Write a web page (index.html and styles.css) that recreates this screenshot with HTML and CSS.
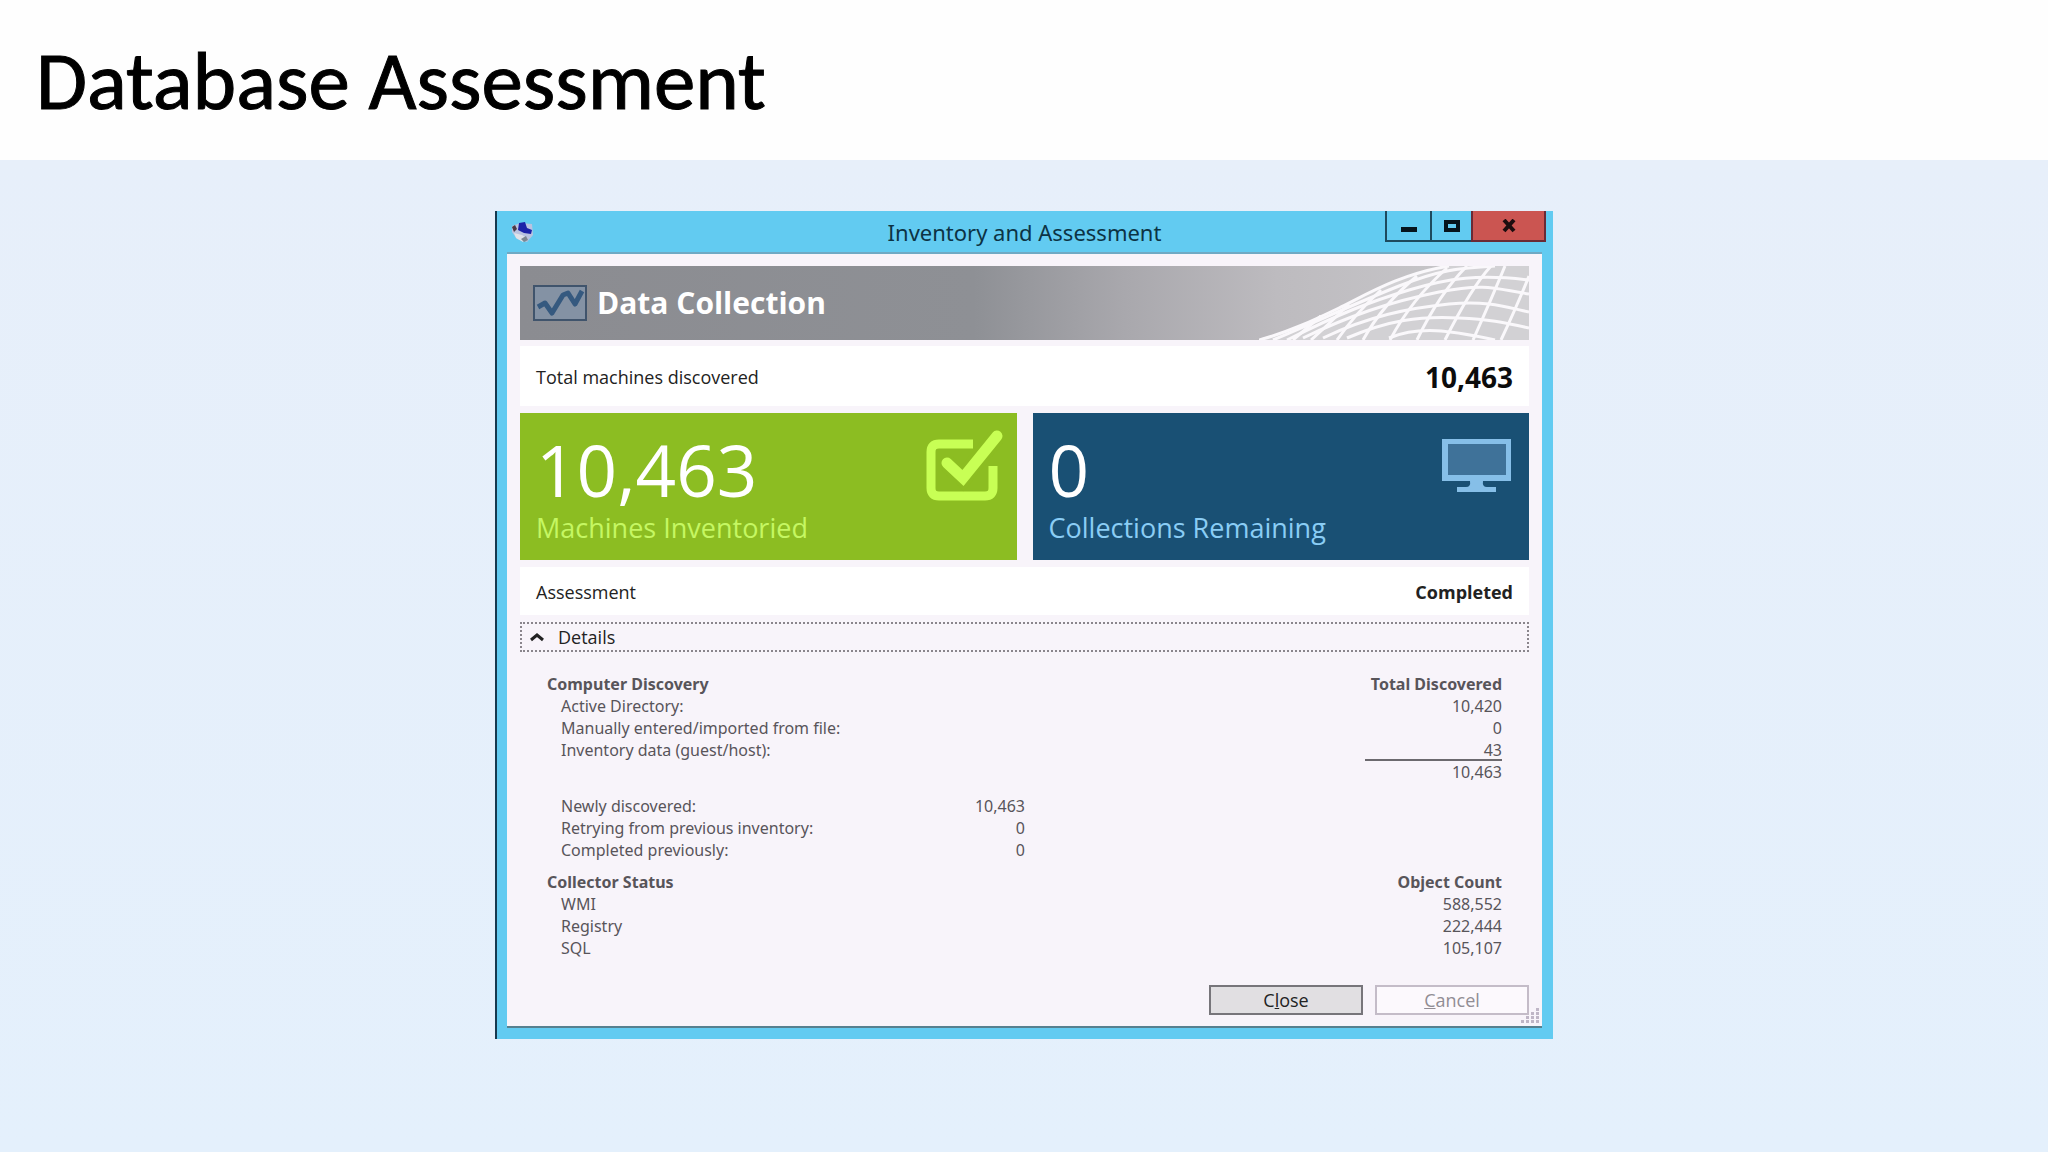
FILE: index.html
```html
<!DOCTYPE html>
<html lang="en">
<head>
<meta charset="utf-8">
<title>Database Assessment</title>
<link rel="stylesheet" href="styles.css">
</head>
<body>
<header class="slide-header">
  <h1 class="slide-title">Database Assessment</h1>
</header>
<main class="slide-body">
  <section class="window" aria-labelledby="window-title">
    <div class="titlebar">
      <svg class="app-icon" viewBox="0 0 24 24" aria-hidden="true">
        <path d="M1 5 9 2l12 1 1 11-6 7-10-3-5-7z" fill="#b9c3e0"/>
        <path d="M8 2l6-1 2 6 5 2-1 4-7-1-6-3z" fill="#1c22a8"/>
        <path d="M1 6l3-2 2 4-3 3z" fill="#4b3a46"/>
        <path d="M3 12l8 2 5 3-4 4-7-4z" fill="#dfe3ea"/>
        <path d="M10 18l5-3 2 4-4 2z" fill="#7d8790"/>
      </svg>
      <h2 class="window-title" id="window-title">Inventory and Assessment</h2>
      <div class="controls">
        <button class="control control-min" type="button" aria-label="Minimize">
          <svg class="control-icon" viewBox="0 0 18 14" aria-hidden="true"><path d="M1 8h16v5H1z" fill="#06141c"/></svg>
        </button>
        <button class="control" type="button" aria-label="Maximize">
          <svg class="control-icon" viewBox="0 0 18 14" aria-hidden="true"><path d="M3 3h12v8H3z" fill="none" stroke="#06141c" stroke-width="4"/></svg>
        </button>
        <button class="control control-close" type="button" aria-label="Close window">
          <svg class="control-icon" viewBox="0 0 18 14" aria-hidden="true"><path d="M4 1l10 11M14 1L4 12" fill="none" stroke="#1d0d0f" stroke-width="4"/></svg>
        </button>
      </div>
    </div>
    <div class="client">
      <div class="banner">
        <svg class="banner-icon" viewBox="0 0 54 36" aria-hidden="true">
          <path d="M1 1h52v34H1z" fill="#8492a4" stroke="#40546c" stroke-width="2"/>
          <path d="M5 22l7-4 7 10 11-18 5-2 7 11 7-13" fill="none" stroke="#35597f" stroke-width="5" stroke-linejoin="round"/>
        </svg>
        <h3 class="banner-title">Data Collection</h3>
        <svg class="mesh" viewBox="0 0 270 74" aria-hidden="true">
          <path d="M0 74C30 66 55 54 80 42S140 8 190 0H270V74z" fill="#d2d1d4"/>
          <g fill="none" stroke="#faf8fb" stroke-width="3">
            <path d="M0 74C30 66 55 54 80 42S140 8 190 0"/>
            <path d="M14 74C70 50 100 36 140 20S200 2 236 0"/>
            <path d="M28 74C80 48 110 36 150 24S220 8 270 14"/>
            <path d="M44 72C90 50 130 36 180 26S240 24 270 28"/>
            <path d="M64 72C110 50 150 42 190 38S250 42 270 46"/>
            <path d="M88 72C130 54 160 50 200 52S250 58 270 62"/>
            <path d="M130 72C160 60 190 64 236 74"/>
            <path d="M34 74L62 50M52 74Q70 58 90 38M78 74Q96 48 122 24M104 74Q124 38 158 10M131 74Q152 34 188 2M158 74Q180 28 208 0M186 74Q212 22 232 0M214 74Q232 34 246 0M242 74Q258 40 270 10"/>
          </g>
        </svg>
      </div>
      <div class="summary-row summary-total">
        <span>Total machines discovered</span>
        <strong class="total">10,463</strong>
      </div>
      <div class="tiles">
        <section class="tile tile-green">
          <div class="tile-text">
            <strong class="tile-number">10,463</strong>
            <span class="tile-label">Machines Inventoried</span>
          </div>
          <svg class="tile-icon" viewBox="0 0 78 72" aria-hidden="true">
            <path d="M48 14H14Q6 14 6 22V58Q6 66 14 66H60Q68 66 68 58V36" fill="none" stroke="#c8ff55" stroke-width="9"/>
            <path d="M22 33L38 48L72 6" fill="none" stroke="#8cbd22" stroke-width="18"/>
            <path d="M22 33L38 48L72 6" fill="none" stroke="#c8ff55" stroke-width="11" stroke-linecap="round"/>
          </svg>
        </section>
        <section class="tile tile-blue">
          <div class="tile-text">
            <strong class="tile-number">0</strong>
            <span class="tile-label">Collections Remaining</span>
          </div>
          <svg class="tile-icon" viewBox="0 0 78 72" aria-hidden="true">
            <path d="M5 9H74V51H46Q45 57 50 57H59V62H20V57H29Q34 57 33 51H5z" fill="#86bfe8"/>
            <path d="M11 14H69V45H11z" fill="#3f7299"/>
          </svg>
        </section>
      </div>
      <div class="summary-row summary-status">
        <span>Assessment</span>
        <strong>Completed</strong>
      </div>
      <details class="details" open>
        <summary class="details-toggle">
          <svg class="chevron" viewBox="0 0 14 10" aria-hidden="true"><path d="M1 8l6-5 6 5" fill="none" stroke="#222" stroke-width="3"/></svg>
          Details
        </summary>
        <table class="stats">
          <colgroup><col class="col-label"><col class="col-mid"><col><col class="col-total"></colgroup>
          <thead>
            <tr><th scope="col">Computer Discovery</th><td></td><td></td><th scope="col">Total Discovered</th></tr>
          </thead>
          <tbody>
            <tr><td>Active Directory:</td><td></td><td></td><td>10,420</td></tr>
            <tr><td>Manually entered/imported from file:</td><td></td><td></td><td>0</td></tr>
            <tr><td>Inventory data (guest/host):</td><td></td><td></td><td>43</td></tr>
            <tr class="sum"><td></td><td></td><td></td><td>10,463</td></tr>
          </tbody>
          <tbody class="progress">
            <tr><td>Newly discovered:</td><td>10,463</td><td></td><td></td></tr>
            <tr><td>Retrying from previous inventory:</td><td>0</td><td></td><td></td></tr>
            <tr><td>Completed previously:</td><td>0</td><td></td><td></td></tr>
          </tbody>
        </table>
        <table class="stats stats-collector">
          <thead>
            <tr><th scope="col">Collector Status</th><th scope="col">Object Count</th></tr>
          </thead>
          <tbody>
            <tr><td>WMI</td><td>588,552</td></tr>
            <tr><td>Registry</td><td>222,444</td></tr>
            <tr><td>SQL</td><td>105,107</td></tr>
          </tbody>
        </table>
      </details>
      <div class="actions">
        <button class="button" type="button"><span>C<u>l</u>ose</span></button>
        <button class="button" type="button" disabled><span><u>C</u>ancel</span></button>
      </div>
      <svg class="grip" viewBox="0 0 20 16" aria-hidden="true">
        <path d="M16 0h3v3h-3zM11 4h3v3h-3zM16 4h3v3h-3zM6 8h3v3H6zM11 8h3v3h-3zM16 8h3v3h-3zM1 12h3v3H1zM6 12h3v3H6zM11 12h3v3h-3zM16 12h3v3h-3z" fill="#bfb6c6"/>
      </svg>
    </div>
  </section>
</main>
</body>
</html>
```
FILE: styles.css
```css
* {
  box-sizing: border-box;
}

body {
  margin: 0;
  min-height: 100vh;
  display: flex;
  flex-direction: column;
  background: #e7effa;
  color: #222;
  font: 18px/22px "Open Sans", "Noto Sans", sans-serif;
}

h1,
h2,
h3 {
  margin: 0;
}

.slide-header {
  height: 160px;
  padding: 2px 36px 0;
  display: flex;
  align-items: center;
  background: #fefefe;
}

.slide-title {
  font: 400 83px/96px Carlito, Calibri, Lato, sans-serif;
  color: #000;
  -webkit-text-stroke: 1px #000;
}

.slide-body {
  flex: 1;
  padding: 51px 16px;
  background: linear-gradient(#e7effa, #e4f0fc);
}

.window {
  max-width: 1058px;
  margin: 0 auto;
  padding: 0 11px 11px 10px;
  border-left: 2px solid #16394f;
  background: #62cbf1;
}

.titlebar {
  height: 43px;
  display: grid;
  grid-template-columns: 1fr auto 1fr;
  align-items: center;
  border-bottom: 2px solid #6fa9c4;
}

.app-icon {
  width: 24px;
  height: 24px;
  margin: 2px 0 0 4px;
}

.window-title {
  font-family: "Noto Sans", sans-serif;
  font-size: 22px;
  font-weight: 400;
  line-height: 32px;
  color: #0c3344;
}

.controls {
  align-self: start;
  justify-self: end;
  margin-right: -4px;
  display: flex;
}

.control {
  width: 41px;
  height: 31px;
  padding: 0;
  display: flex;
  align-items: center;
  justify-content: center;
  border: solid #1d4a5e;
  border-width: 0 0 2px 2px;
  background: transparent;
}

.control-min {
  width: 45px;
}

.control-close {
  width: 75px;
  border-color: #6b2a35;
  border-right-width: 2px;
  background: #cb5551;
}

.control-icon {
  width: 18px;
  height: 14px;
}

.client {
  position: relative;
  padding: 12px 13px 11px;
  border-bottom: 2px solid #57808f;
  background: #f8f4fa;
}

.banner {
  position: relative;
  height: 74px;
  padding-left: 13px;
  display: flex;
  align-items: center;
  gap: 10px;
  overflow: hidden;
  background: linear-gradient(90deg, #8b8c91 0%, #8e9095 45%, #a9a8ad 60%, #bdbbbf 75%, #cac9cc 100%);
}

.banner-icon {
  width: 54px;
  height: 36px;
}

.banner-title {
  font-size: 30px;
  line-height: 36px;
  color: #fff;
}

.mesh {
  position: absolute;
  right: 0;
  top: 0;
  width: 270px;
  height: 74px;
}

.summary-row {
  padding: 2px 16px 0;
  display: flex;
  align-items: center;
  justify-content: space-between;
  background: #fff;
}

.summary-total {
  height: 60px;
  margin: 6px 0 7px;
}

.summary-status {
  height: 48px;
  margin: 7px 0;
}

.total {
  font-size: 28px;
  color: #0c0c0c;
}

.tiles {
  display: grid;
  grid-template-columns: 1fr 1fr;
  gap: 16px;
}

.tile {
  height: 147px;
  padding: 17px 14px 14px 16px;
  display: flex;
  justify-content: space-between;
}

.tile-green {
  background: #8cbd22;
  color: #c5f762;
}

.tile-blue {
  background: #195074;
  color: #8acdf5;
}

.tile-text {
  display: flex;
  flex-direction: column;
}

.tile-number {
  font-size: 71px;
  font-weight: 400;
  line-height: 80px;
  color: #fff;
}

.tile-label {
  font-size: 27px;
  line-height: 36px;
}

.tile-icon {
  width: 78px;
  height: 72px;
}

.details-toggle {
  height: 30px;
  padding: 0 8px;
  display: flex;
  align-items: center;
  gap: 14px;
  border: 2px dotted #8a858c;
  list-style: none;
}

.chevron {
  width: 14px;
  height: 10px;
}

.stats {
  width: 100%;
  margin-top: 22px;
  padding: 0 27px;
  border-spacing: 0;
  color: #58555a;
  font-family: "Noto Sans", sans-serif;
  font-size: 16px;
}

.stats th,
.stats td {
  padding: 0;
  text-align: right;
}

.stats thead {
  line-height: 21px;
}

.stats tr > :first-child {
  text-align: left;
}

.stats tbody td:first-child {
  padding-left: 14px;
}

.sum td:last-child {
  box-shadow: 0 -2px #6c696e;
}

.col-label {
  width: 340px;
}

.col-mid {
  width: 138px;
}

.col-total {
  width: 137px;
}

.progress tr:first-child td {
  padding-top: 12px;
}

.stats-collector {
  margin-top: 11px;
}

.actions {
  margin-top: 26px;
  display: flex;
  justify-content: flex-end;
  gap: 12px;
}

.button {
  width: 154px;
  height: 30px;
  padding: 0;
  border: 2px solid #77757a;
  background: #e1dfe2;
  color: #222;
  font: inherit;
  line-height: 22px;
}

.button:disabled {
  border-color: #c4bcc8;
  background: #fcf9fd;
  color: #918d94;
}

.grip {
  position: absolute;
  right: 2px;
  bottom: 2px;
  width: 20px;
  height: 16px;
}
```
